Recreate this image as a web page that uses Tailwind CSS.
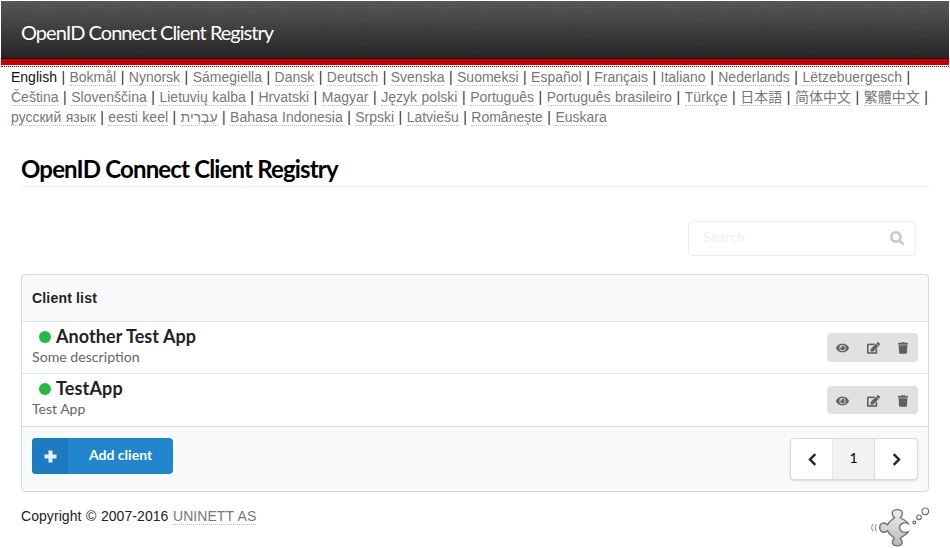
<!DOCTYPE html>
<html lang="en">
<head>
<meta charset="utf-8">
<title>OpenID Connect Client Registry</title>
<script src="https://cdn.jsdelivr.net/npm/@tailwindcss/browser@4"></script>
</head>
<body class="bg-white w-[950px] h-[548px] overflow-hidden text-[14px] leading-5 text-black font-['Liberation_Sans','Noto_Sans_CJK_JP',sans-serif]">
<svg class="hidden">
  <symbol id="eye" viewBox="0 0 576 512"><path d="M572.52 241.4C518.29 135.59 410.93 64 288 64S57.68 135.64 3.48 241.41a32.35 32.35 0 0 0 0 29.19C57.71 376.41 165.07 448 288 448s230.32-71.64 284.52-177.41a32.35 32.35 0 0 0 0-29.19zM288 400a144 144 0 1 1 144-144 143.93 143.93 0 0 1-144 144zm0-240a95.31 95.31 0 0 0-25.31 3.79 47.85 47.85 0 0 1-66.9 66.9A95.78 95.78 0 1 0 288 160z"/></symbol>
  <symbol id="edit" viewBox="0 0 576 512"><path d="M402.6 83.2l90.2 90.2c3.8 3.8 3.8 10 0 13.8L274.4 405.6l-92.8 10.3c-12.4 1.4-22.9-9.1-21.5-21.5l10.3-92.8L388.8 83.2c3.8-3.8 10-3.8 13.8 0zm162-22.9l-48.8-48.8c-15.2-15.2-39.9-15.2-55.2 0l-35.4 35.4c-3.8 3.8-3.8 10 0 13.8l90.2 90.2c3.8 3.8 10 3.8 13.8 0l35.4-35.4c15.2-15.3 15.2-40 0-55.2zM384 346.2V448H64V128h229.8c3.2 0 6.2-1.3 8.5-3.5l40-40c7.6-7.6 2.2-20.5-8.5-20.5H48C21.5 64 0 85.500 0 112v352c0 26.500 21.500 48 48 48h352c26.500 0 48-21.500 48-48V306.200c0-10.700-12.900-16-20.500-8.500l-40 40c-2.200 2.300-3.500 5.300-3.500 8.500z"/></symbol>
  <symbol id="trash" viewBox="0 0 448 512"><path d="M432 32H312l-9.4-18.7A24 24 0 0 0 281.1 0H166.8a23.72 23.72 0 0 0-21.4 13.3L136 32H16A16 16 0 0 0 0 48v32a16 16 0 0 0 16 16h416a16 16 0 0 0 16-16V48a16 16 0 0 0-16-16zM53.2 467a48 48 0 0 0 47.9 45h245.8a48 48 0 0 0 47.9-45L416 128H32z"/></symbol>
</svg>

<div class="pt-px mx-px">
  <header class="h-[58px] bg-[repeating-linear-gradient(60deg,rgba(255,255,255,.035)_0_1px,transparent_1px_3px),linear-gradient(#555,#232323)] border-b border-black pl-5 pt-[17px]">
    <div class="font-[Lato] text-[20px] leading-7 tracking-[-0.98px] text-white">OpenID Connect Client Registry</div>
  </header>
  <div class="h-[6px] bg-[#c00]"></div>
  <div class="mt-px h-px border-t border-dotted border-[#a00010]"></div>
</div>

<nav class="pl-[11px] whitespace-nowrap [word-spacing:0.58px] text-[#333] [&_a]:text-[#777] [&_a]:border-b [&_a]:border-dotted [&_a]:border-[#bbb] [&_a]:inline-block [&_a]:h-[19px] [&_a]:align-top">
  <div class="h-5"><span class="text-[#111]">English</span> | <a>Bokmål</a> | <a>Nynorsk</a> | <a>Sámegiella</a> | <a>Dansk</a> | <a>Deutsch</a> | <a>Svenska</a> | <a>Suomeksi</a> | <a>Español</a> | <a>Français</a> | <a>Italiano</a> | <a>Nederlands</a> | <a>Lëtzebuergesch</a> |</div>
  <div class="h-5 [word-spacing:0.66px]"><a>Čeština</a> | <a>Slovenščina</a> | <a>Lietuvių kalba</a> | <a>Hrvatski</a> | <a>Magyar</a> | <a>Język polski</a> | <a>Português</a> | <a>Português brasileiro</a> | <a>Türkçe</a> | <a lang="ja">日本語</a> | <a lang="zh-Hans">简体中文</a> | <a lang="zh-Hant">繁體中文</a> |</div>
  <div class="h-5 [word-spacing:0.54px]"><a>русский язык</a> | <a>eesti keel</a> | <a>עִבְרִית</a> | <a>Bahasa Indonesia</a> | <a>Srpski</a> | <a>Latviešu</a> | <a>Românește</a> | <a>Euskara</a></div>
</nav>

<main class="mx-[21px] w-[908px]">
  <h2 class="mt-[26px] h-[34px] border-b border-[#eee] font-[Lato] font-bold text-[24px] leading-[32px] tracking-[-0.84px] text-black">OpenID Connect Client Registry</h2>

  <div class="mt-[34px] ml-[667px] w-[228px] h-[35px] border border-[#eeeeef] rounded flex items-center justify-between pl-[14px] pr-[11px] font-[Lato] text-[#f0f0f0]">
    <span class="pb-[3px] tracking-[0.15px]">Search</span>
    <svg class="w-[14px] h-[14px] mb-px fill-[#c8c8c8] stroke-[#c8c8c8] [stroke-width:60]" viewBox="40 104 1712 1712"><path d="M1216 832q0-185-131.5-316.5t-316.5-131.5-316.5 131.5-131.5 316.5 131.5 316.5 316.5 131.5 316.5-131.5 131.5-316.5zm512 832q0 52-38 90t-90 38q-54 0-90-38l-343-342q-179 124-399 124-143 0-273.5-55.5t-225-150-150-225-55.5-273.5 55.5-273.5 150-225 225-150 273.5-55.5 273.5 55.5 225 150 150 225 55.5 273.5q0 220-124 399l343 343q37 37 37 90z"/></svg>
  </div>

  <section class="mt-[18px] h-[218px] border border-[#d9dadb] rounded bg-[#f9fafb] overflow-hidden">
    <div class="h-[47px] border-b border-[#dfe0e1] px-[10px] pt-[13px] font-bold tracking-[0.18px] text-[#222]">Client list</div>
    <div class="h-[52px] bg-white border-b border-[#e2e3e4] px-[10px] flex justify-between font-[Lato]">
      <div>
        <div class="flex items-center pl-[7px] pt-[3px] h-[26px] text-[18px] font-bold tracking-[0.07px] text-[#222]"><i class="size-3 rounded-full bg-[#21ba45] mr-[5px]"></i><span class="pb-[2px]">Another Test App</span></div>
        <div class="leading-[18px] text-[14.15px] text-[#666]">Some description</div>
      </div>
      <div class="mt-[11px] w-[91px] h-[29px] rounded bg-[#e0e1e2] fill-[#606060] stroke-[#606060] [stroke-width:10] flex items-center">
        <svg class="ml-[9px] w-[13px] h-[12px]"><use href="#eye"/></svg>
        <svg class="ml-[18px] w-[13px] h-[12px]"><use href="#edit"/></svg>
        <svg class="ml-[18px] w-[10px] h-[12px]"><use href="#trash"/></svg>
      </div>
    </div>
    <div class="h-[53px] bg-white border-b border-[#d9dadb] px-[10px] flex justify-between font-[Lato]">
      <div>
        <div class="flex items-center pl-[7px] pt-[3px] h-[26px] text-[18px] font-bold tracking-[0.15px] text-[#222]"><i class="size-3 rounded-full bg-[#21ba45] mr-[5px]"></i><span class="pb-[2px]">TestApp</span></div>
        <div class="leading-[18px] text-[#666]">Test App</div>
      </div>
      <div class="mt-[12px] w-[91px] h-[28px] rounded bg-[#e0e1e2] fill-[#606060] stroke-[#606060] [stroke-width:10] flex items-center pt-px">
        <svg class="ml-[9px] w-[13px] h-[12px]"><use href="#eye"/></svg>
        <svg class="ml-[18px] w-[13px] h-[12px]"><use href="#edit"/></svg>
        <svg class="ml-[18px] w-[10px] h-[12px]"><use href="#trash"/></svg>
      </div>
    </div>
    <div class="flex justify-between items-start px-[10px] pt-[11px] font-[Lato]">
      <div class="flex w-[141px] h-9 rounded overflow-hidden bg-[#2185d0] text-white font-bold">
        <div class="w-9 bg-[#1e7bc2] flex items-center justify-center"><svg class="w-[13px] h-[13px]" viewBox="0 0 13 13" fill="none" stroke="#e8f1f9" stroke-width="4"><path d="M6.500 .5v12M.5 6.500h12"/></svg></div>
        <div class="pl-[21px] leading-[34px]">Add client</div>
      </div>
      <div class="flex w-[128px] h-[42px] border border-[#d9dadb] rounded bg-white shadow-[0_1px_2px_rgba(34,36,38,.15)] overflow-hidden">
        <div class="w-[42px] border-r border-[#e6e6e7] flex items-center justify-center pl-[2px]"><svg class="w-[9px] h-[13px]" viewBox="0 0 9 13" fill="none" stroke="#222" stroke-width="2.4"><path d="M7.300 1.200 2 6.500l5.300 5.300"/></svg></div>
        <div class="w-[42px] bg-[#f2f2f2] border-r border-[#dededf] flex items-center justify-center pb-[2px] text-black">1</div>
        <div class="flex-1 flex items-center justify-center"><svg class="w-[9px] h-[13px]" viewBox="0 0 9 13" fill="none" stroke="#222" stroke-width="2.4"><path d="M1.700 1.200 7 6.500l-5.300 5.300"/></svg></div>
      </div>
    </div>
  </section>
</main>

<footer class="ml-[21px] w-[909px] flex justify-between items-start text-[#222]">
  <div class="pt-[14px] tracking-[0.06px] [word-spacing:0.6px]">Copyright © 2007-2016 <a class="inline-block h-[19px] align-top text-[#777] border-b border-dotted border-[#bbb]">UNINETT AS</a></div>
  <svg class="w-[60px] h-[42px] mt-[14px]" viewBox="870 506 60 42">
    <defs><linearGradient id="piece" x1="0" y1="0" x2="0" y2="1"><stop offset="0" stop-color="#eee"/><stop offset="1" stop-color="#bbb"/></linearGradient></defs>
    <path fill="url(#piece)" stroke="#707070" stroke-width="1.300" d="M894.500 517.500C890.500 514 892 509.700 897.300 509.700S904 514 900.300 517.500C901 519 906.500 519.500 908.300 523.800C905.500 521.800 900 522.500 899.500 527.500C900 532.500 905.500 533.200 908.500 531.500C907 535.500 901.500 536 900.300 538.500C903.800 542 902 545.800 897.300 545.800S890.700 542 894.300 538.500C893.500 536 889 535.500 887.600 530.700C884.500 533.500 879.700 532.500 879.700 527.500S884.500 521.800 887.600 524.800C889 520.500 893 519.500 894.500 517.500Z"/>
    <g fill="none" stroke="#707070" stroke-width="1.200"><circle cx="914.300" cy="522.500" r="1.400"/><circle cx="919" cy="517.300" r="2.300"/><circle cx="925.300" cy="511.300" r="3.300"/><path stroke="#888" stroke-width="1" d="M872.800 524q-2.600 3.700 0 7.400M876.300 524q-2.600 3.700 0 7.400"/></g>
  </svg>
</footer>
</body>
</html>
